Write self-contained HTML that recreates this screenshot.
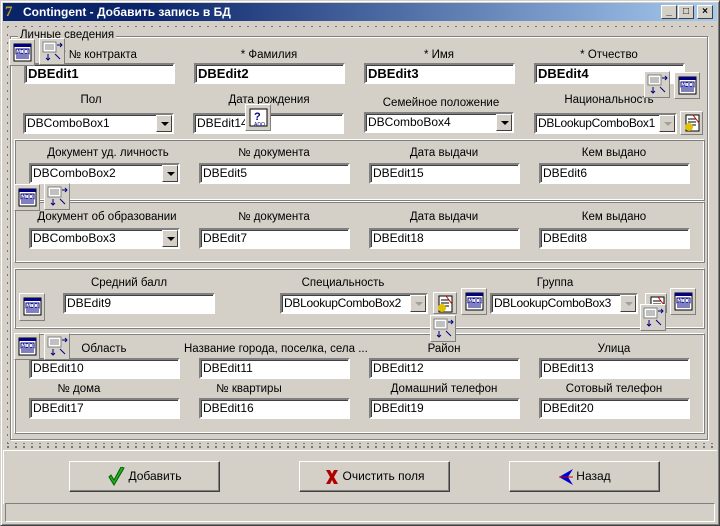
<!DOCTYPE html>
<html><head><meta charset="utf-8">
<style>
*{box-sizing:border-box;margin:0;padding:0}
body{width:720px;height:526px;background:#d4d0c8;font-family:"Liberation Sans",sans-serif;font-size:11px;color:#000;position:relative;overflow:hidden}
.a{position:absolute}
.win{left:0;top:0;width:720px;height:526px;border:1px solid;border-color:#d4d0c8 #404040 #404040 #d4d0c8;box-shadow:inset 1px 1px 0 #fff,inset -1px -1px 0 #808080}
.title{left:3px;top:3px;width:714px;height:18px;background:linear-gradient(90deg,#0a246a 20%,#a6caf0);color:#fff;font-weight:bold;font-size:12px;line-height:18px;padding-left:20px}
.dots{background-image:radial-gradient(#000 0.6px,transparent 0.9px);background-size:8px 8px}
.tb{width:16px;height:14px;top:5px;background:#d4d0c8;border:1px solid;border-color:#fff #404040 #404040 #fff;font-size:10px;line-height:11px;text-align:center;font-weight:bold}
.ed{height:21px;background:#fff;border:2px solid;border-color:#808080 #fff #fff #808080;box-shadow:inset 1px 1px 0 #404040;padding-left:2px;line-height:17px;font-size:12px;white-space:nowrap;overflow:hidden}
.b{font-weight:bold;font-size:13px}
.lb{text-align:center;width:150px;white-space:nowrap;font-size:11.5px}
.dd{position:absolute;right:0;top:0;width:16px;height:17px;background:#d4d0c8;border:1px solid;border-color:#fff #404040 #404040 #fff}
.dd:after{content:"";position:absolute;left:4px;top:6px;border:4px solid transparent;border-top:4px solid #000;border-bottom:0}
.dd.g:after{border-top-color:#a0a0a0}
.pn{border:1px solid;border-color:#fff #808080 #808080 #fff;box-shadow:inset 1px 1px 0 #808080,inset -1px -1px 0 #fff}
.ic{width:26px;height:27px;background:#d4d0c8;border:1px solid;border-color:#fff #808080 #808080 #fff}
.btn{width:151px;height:31px;background:#d4d0c8;border:1px solid;border-color:#fff #404040 #404040 #fff;box-shadow:inset -1px -1px 0 #808080;text-align:center;line-height:29px;font-size:12px}
</style></head><body>
<div class="a win"></div>
<div class="a title">Contingent - Добавить запись в БД</div>
<div class="a" style="left:5px;top:4px;font-size:15px;font-weight:bold;color:#c8a020;font-family:'Liberation Serif',serif">7</div>
<div class="a tb" style="left:661px">_</div><div class="a tb" style="left:678px">□</div><div class="a tb" style="left:697px">×</div>
<div class="a dots" style="left:4px;top:23px;width:712px;height:424px"></div>
<div class="a" style="left:8px;top:27px;width:705px;height:416px;background:#d4d0c8"></div>
<div class="a" style="left:10px;top:36px;width:698px;height:404px;border:1px solid #808080;box-shadow:1px 1px 0 #fff,inset 1px 1px 0 #fff"></div>
<div class="a" style="left:18px;top:29px;background:#d4d0c8;padding:0 2px;font-size:11.5px">Личные сведения</div>

<div class="a lb" style="left:24px;top:49px">* № контракта</div>
<div class="a lb" style="left:194px;top:49px">* Фамилия</div>
<div class="a lb" style="left:364px;top:49px">* Имя</div>
<div class="a lb" style="left:534px;top:49px">* Отчество</div>
<div class="a ed b" style="left:24px;top:63px;width:151px">DBEdit1</div>
<div class="a ed b" style="left:194px;top:63px;width:151px">DBEdit2</div>
<div class="a ed b" style="left:364px;top:63px;width:151px">DBEdit3</div>
<div class="a ed b" style="left:534px;top:63px;width:151px">DBEdit4</div>
<div class="a lb" style="left:16px;top:94px">Пол</div>
<div class="a lb" style="left:194px;top:94px">Дата рождения</div>
<div class="a lb" style="left:366px;top:97px">Семейное положение</div>
<div class="a lb" style="left:534px;top:94px">Национальность</div>
<div class="a ed" style="left:23px;top:113px;width:151px">DBComboBox1<div class="dd"></div></div>
<div class="a ed" style="left:193px;top:113px;width:151px">DBEdit14</div>
<div class="a ed" style="left:364px;top:112px;width:150px">DBComboBox4<div class="dd"></div></div>
<div class="a ed" style="left:534px;top:113px;width:143px;letter-spacing:-0.3px">DBLookupComboBox1<div class="dd g"></div></div>

<div class="a pn" style="left:14px;top:139px;width:691px;height:62px"></div>
<div class="a lb" style="left:33px;top:147px">Документ уд. личность</div>
<div class="a lb" style="left:199px;top:147px">№ документа</div>
<div class="a lb" style="left:369px;top:147px">Дата выдачи</div>
<div class="a lb" style="left:539px;top:147px">Кем выдано</div>
<div class="a ed" style="left:29px;top:163px;width:151px">DBComboBox2<div class="dd"></div></div>
<div class="a ed" style="left:199px;top:163px;width:151px">DBEdit5</div>
<div class="a ed" style="left:369px;top:163px;width:151px">DBEdit15</div>
<div class="a ed" style="left:539px;top:163px;width:151px">DBEdit6</div>
<div class="a pn" style="left:14px;top:201px;width:691px;height:62px"></div>
<div class="a lb" style="left:22px;top:211px;width:170px">Документ об образовании</div>
<div class="a lb" style="left:199px;top:211px">№ документа</div>
<div class="a lb" style="left:369px;top:211px">Дата выдачи</div>
<div class="a lb" style="left:539px;top:211px">Кем выдано</div>
<div class="a ed" style="left:29px;top:228px;width:151px">DBComboBox3<div class="dd"></div></div>
<div class="a ed" style="left:199px;top:228px;width:151px">DBEdit7</div>
<div class="a ed" style="left:369px;top:228px;width:151px">DBEdit18</div>
<div class="a ed" style="left:539px;top:228px;width:151px">DBEdit8</div>
<div class="a pn" style="left:14px;top:268px;width:691px;height:61px"></div>
<div class="a lb" style="left:54px;top:277px">Средний балл</div>
<div class="a lb" style="left:268px;top:277px">Специальность</div>
<div class="a lb" style="left:480px;top:277px">Группа</div>
<div class="a ed" style="left:63px;top:293px;width:152px">DBEdit9</div>
<div class="a ed" style="left:280px;top:293px;width:148px;letter-spacing:-0.3px">DBLookupComboBox2<div class="dd g"></div></div>
<div class="a ed" style="left:490px;top:293px;width:148px;letter-spacing:-0.3px">DBLookupComboBox3<div class="dd g"></div></div>
<div class="a pn" style="left:14px;top:333px;width:691px;height:101px"></div>
<div class="a lb" style="left:29px;top:343px">Область</div>
<div class="a lb" style="left:184px;top:343px;width:180px">Название города, поселка, села ...</div>
<div class="a lb" style="left:369px;top:343px">Район</div>
<div class="a lb" style="left:539px;top:343px">Улица</div>
<div class="a ed" style="left:29px;top:358px;width:151px">DBEdit10</div>
<div class="a ed" style="left:199px;top:358px;width:151px">DBEdit11</div>
<div class="a ed" style="left:369px;top:358px;width:151px">DBEdit12</div>
<div class="a ed" style="left:539px;top:358px;width:151px">DBEdit13</div>
<div class="a lb" style="left:4px;top:383px">№ дома</div>
<div class="a lb" style="left:174px;top:383px">№ квартиры</div>
<div class="a lb" style="left:369px;top:383px">Домашний телефон</div>
<div class="a lb" style="left:539px;top:383px">Сотовый телефон</div>
<div class="a ed" style="left:29px;top:398px;width:151px">DBEdit17</div>
<div class="a ed" style="left:199px;top:398px;width:151px">DBEdit16</div>
<div class="a ed" style="left:369px;top:398px;width:151px">DBEdit19</div>
<div class="a ed" style="left:539px;top:398px;width:151px">DBEdit20</div>

<svg width="0" height="0" style="position:absolute"><defs>
<g id="ado"><rect x="4" y="4" width="17" height="17" fill="#fff" stroke="#000"/><rect x="4" y="4" width="17" height="3" fill="#000080"/><rect x="6" y="9" width="13" height="5" fill="none" stroke="#000080"/><text x="7" y="13.5" font-size="5" fill="#000080" font-family="Liberation Sans">ADO</text><path d="M6 16h13M6 18h13" stroke="#000080"/></g>
<g id="ds"><rect x="3" y="3" width="13" height="10" fill="#fff" stroke="#808080"/><path d="M5 6h9M5 8h9M5 10h9" stroke="#808080"/><path d="M17 6h5M20 4l2 2-2 2M8 15v6M6 19l2 2 2-2M15 15l5 5" stroke="#000080" fill="none"/></g>
<g id="lk"><rect x="5" y="3" width="13" height="16" fill="#fff" stroke="#000"/><path d="M7 7h8M7 10h8M7 13h8" stroke="#000"/><circle cx="8" cy="15" r="4" fill="#e0c000"/><path d="M12 3l6 8" stroke="#c00"/></g>
<g id="q"><rect x="4" y="4" width="17" height="17" fill="#fff" stroke="#000"/><text x="8" y="15" font-size="11" font-weight="bold" fill="#000080" font-family="Liberation Sans">?</text><text x="8" y="21" font-size="5" fill="#000080" font-family="Liberation Sans">ADO</text></g>
</defs></svg>
<div class="a ic" style="left:9px;top:39px"><svg width="24" height="25"><use href="#ado"/></svg></div>
<div class="a ic" style="left:39px;top:38px"><svg width="24" height="25"><use href="#ds"/></svg></div>
<div class="a ic" style="left:245px;top:104px"><svg width="24" height="25"><use href="#q"/></svg></div>
<div class="a ic" style="left:644px;top:71px"><svg width="24" height="25"><use href="#ds"/></svg></div>
<div class="a ic" style="left:674px;top:72px"><svg width="24" height="25"><use href="#ado"/></svg></div>
<div class="a ic" style="left:680px;top:111px;width:23px;height:24px"><svg width="22" height="22"><use href="#lk"/></svg></div>
<div class="a ic" style="left:14px;top:184px"><svg width="24" height="25"><use href="#ado"/></svg></div>
<div class="a ic" style="left:44px;top:183px"><svg width="24" height="25"><use href="#ds"/></svg></div>
<div class="a ic" style="left:19px;top:293px;height:28px"><svg width="24" height="25"><use href="#ado"/></svg></div>
<div class="a ic" style="left:433px;top:292px;width:24px;height:22px"><svg width="22" height="22"><use href="#lk"/></svg></div>
<div class="a ic" style="left:461px;top:288px"><svg width="24" height="25"><use href="#ado"/></svg></div>
<div class="a ic" style="left:645px;top:293px;width:22px;height:20px"><svg width="22" height="20"><use href="#lk"/></svg></div>
<div class="a ic" style="left:670px;top:288px"><svg width="24" height="25"><use href="#ado"/></svg></div>
<div class="a ic" style="left:430px;top:315px"><svg width="24" height="25"><use href="#ds"/></svg></div>
<div class="a ic" style="left:640px;top:304px"><svg width="24" height="25"><use href="#ds"/></svg></div>
<div class="a ic" style="left:14px;top:333px"><svg width="24" height="25"><use href="#ado"/></svg></div>
<div class="a ic" style="left:44px;top:333px"><svg width="24" height="25"><use href="#ds"/></svg></div>

<div class="a dots" style="left:4px;top:443px;width:712px;height:6px"></div>
<div class="a" style="left:3px;top:450px;width:714px;height:54px;border-top:1px solid #fff;border-left:1px solid #fff"></div>
<div class="a btn" style="left:69px;top:461px"><svg width="18" height="20" style="vertical-align:middle;margin-right:3px"><path d="M2 10l5 8 10-17-3-1-7 13-3-5z" fill="#20b020" stroke="#006000"/></svg>Добавить</div>
<div class="a btn" style="left:299px;top:461px"><svg width="14" height="16" style="vertical-align:middle;margin-right:4px"><path d="M1 1l4 0 2 4 2-4 4 0-4 7 4 7-4 0-2-4-2 4-4 0 4-7z" fill="#b00000"/></svg>Очистить поля</div>
<div class="a btn" style="left:509px;top:461px"><svg width="16" height="18" style="vertical-align:middle;margin-right:2px"><path d="M1 9l14-8-5 8 5 8z" fill="#0000d0"/><path d="M1 9h14" stroke="#c00"/></svg>Назад</div>
<div class="a" style="left:5px;top:503px;width:710px;height:19px;border:1px solid;border-color:#808080 #fff #fff #808080"></div>
</body></html>
